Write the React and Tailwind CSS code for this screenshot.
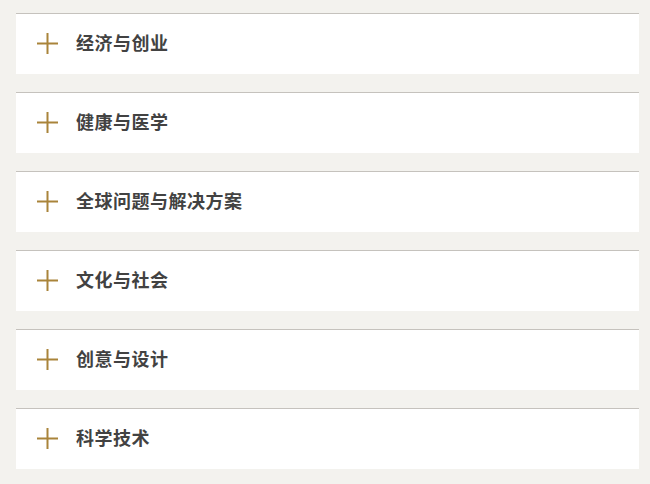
import React from "react";

const items = ["经济与创业", "健康与医学", "全球问题与解决方案", "文化与社会", "创意与设计", "科学技术"];

function Plus() {
  return (
    <svg width="21" height="21" viewBox="0 0 21 21" className="shrink-0">
      <rect x="0" y="9.5" width="21" height="2" fill="#a9843a" />
      <rect x="9.5" y="0" width="2" height="21" fill="#a9843a" />
    </svg>
  );
}

export default function App() {
  return (
    <div className="w-[650px] h-[484px] bg-[#f3f2ee] pt-[13px] pl-4 overflow-hidden" style={{ fontFamily: '"Noto Sans CJK SC", "Noto Sans", sans-serif' }}>
      <div className="flex flex-col gap-[18px] w-[623px]">
        {items.map((t) => (
          <div key={t} className="h-[61px] bg-white border-t border-[#c5c2bd] flex items-center pl-[21px] pb-[2px]">
            <Plus />
            <span className="ml-[18px] mb-[3px] text-[18px] tracking-[0.5px] font-bold text-[#424242] leading-none">{t}</span>
          </div>
        ))}
      </div>
    </div>
  );
}
